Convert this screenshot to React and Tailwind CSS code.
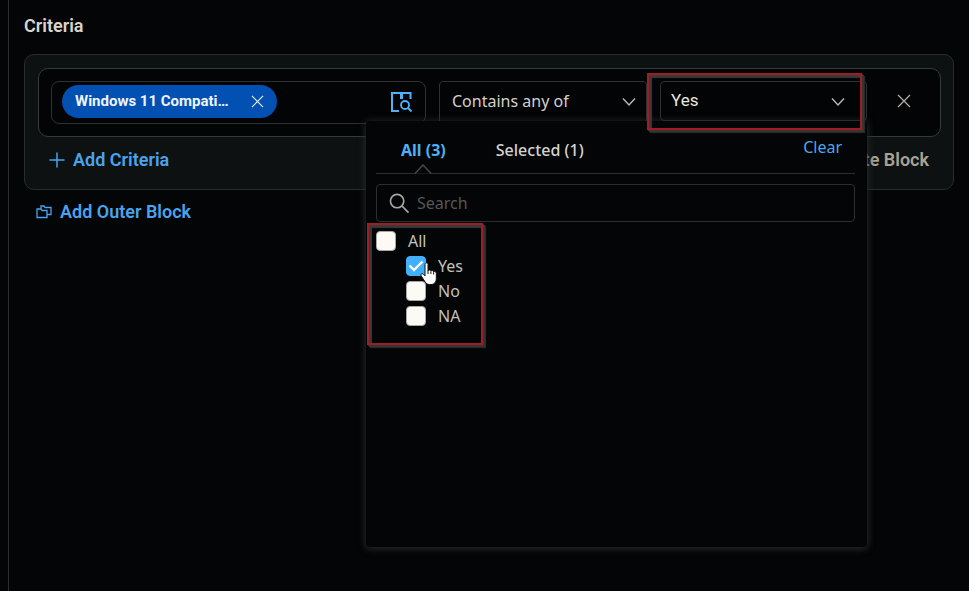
import React from "react";

const roboto = "font-[Roboto,'Liberation_Sans',sans-serif]";
const noto = "font-['Noto_Sans','Open_Sans',sans-serif]";

function Cross({ className }) {
  return (
    <svg viewBox="0 0 14 14" className={className} fill="none" stroke="currentColor" strokeWidth="1.2" aria-hidden="true">
      <path d="M1 1l12 12M13 1L1 13" />
    </svg>
  );
}

function Chevron() {
  return (
    <svg viewBox="0 0 14 10" className="pointer-events-none absolute top-4 right-[11px] h-[10px] w-[14px] text-[#b9b9b9]" fill="none" stroke="currentColor" strokeWidth="1.4" aria-hidden="true">
      <path d="M1 1.5l6 6.5 6-6.5" />
    </svg>
  );
}

// Red frame with a grey extruded shadow, falling to the bottom right.
function Highlight({ className }) {
  return (
    <div
      aria-hidden="true"
      className={`pointer-events-none absolute z-20 border-2 border-[#a01d26] shadow-[1px_1px_0_#363435,2px_2px_0_#363435,3px_3px_1px_#2b2a2b,inset_3px_3px_1px_#3b3a3b] ${className}`}
    />
  );
}

function CheckRow({ id, label, checked, nested }) {
  return (
    <div className={`flex h-[25px] items-center gap-3 ${nested ? "pl-[30px]" : ""}`}>
      <span className="relative flex size-5">
        <input
          id={id}
          type="checkbox"
          defaultChecked={checked}
          className="peer size-5 appearance-none rounded-[4px] border border-[#a9a7a4] bg-[#fdf9f5] checked:border-[#42b0fc] checked:bg-[#42b0fc]"
        />
        <svg viewBox="0 0 20 20" className="pointer-events-none absolute inset-0 hidden peer-checked:block" fill="none" stroke="#fff" strokeWidth="2.4" aria-hidden="true">
          <path d="M3.5 9.5l4.5 4.5 8.5-8.5" />
        </svg>
      </span>
      <label htmlFor={id} className="text-base leading-6 text-[#c4c1bd]">{label}</label>
    </div>
  );
}

function ValuePanel() {
  return (
    <div className={`absolute top-[40px] right-0 z-10 h-[426px] w-[501px] rounded-[4px] bg-[#030506] pr-3 pl-[10px] shadow-[0_1px_7px_1px_#262b2a] ${noto}`}>
      <div className="relative flex h-[53px] items-start border-b border-[#2b2f30] pt-[17px] pr-[13px] pl-[25px]">
        <button type="button" className="text-base leading-6 font-bold text-[#4eb0f6]">All (3)</button>
        <button type="button" className="ml-[50px] text-base leading-6 font-medium text-[#d6d3cf]">Selected (1)</button>
        <button type="button" className="-mt-[3px] ml-auto text-base leading-6 text-[#4ca8ea]">Clear</button>
        <svg viewBox="0 0 18 10" className="absolute -bottom-px left-[38px] h-[10px] w-[18px]" fill="#030506" stroke="#474a4b" strokeWidth="1.4" aria-hidden="true">
          <path d="M1 9.5l8-8.5 8 8.5" />
        </svg>
      </div>
      <div className="mt-[10px] flex h-[38px] items-center gap-[7px] rounded-[4px] border border-[#2b2f30] pl-3">
        <svg viewBox="0 0 22 22" className="size-[21px] shrink-0" fill="none" stroke="#a8a6a3" strokeWidth="1.7" aria-hidden="true">
          <circle cx="8.5" cy="8.5" r="7" />
          <path d="M13.5 13.5l7 7" />
        </svg>
        <input type="text" aria-label="Search" placeholder="Search" className="min-w-0 flex-1 bg-transparent text-base leading-6 text-[#d6d3cf] outline-none placeholder:text-[#575755]" />
      </div>
      <div className="relative mt-[6px]">
        <CheckRow id="opt-all" label="All" />
        <CheckRow id="opt-yes" label="Yes" checked nested />
        <CheckRow id="opt-no" label="No" nested />
        <CheckRow id="opt-na" label="NA" nested />
        <Highlight className="-top-[5px] -left-[9px] h-[122px] w-[116px]" />
        <svg viewBox="0 0 18 24" className="pointer-events-none absolute top-[34px] left-[44px] z-30 h-6 w-[18px]" fill="#fff" stroke="#111" strokeWidth="1" aria-hidden="true">
          <path d="M5 2.5C5 .3 8 .3 8 2.5V9c.3-1.4 2.9-1.3 2.9.2.5-1.1 2.7-.8 2.7.7.6-.8 2.7-.4 2.7 1.3v5.3c0 3.5-1.9 6-5.3 6H9.5c-2.2 0-3.4-1-4.5-2.8l-3.9-5.9c-1-1.7 1.1-2.9 2.3-1.6L5 13.8z" />
          <path d="M8 9v3M10.9 9.5V12M13.6 10.2V12.5" />
        </svg>
      </div>
    </div>
  );
}

export default function App() {
  return (
    <div className={`min-h-screen bg-[#030506] pl-2 ${roboto}`}>
      <main className="min-h-screen border-l border-[#2b2d2e] pt-[14px] pr-[15px] pl-[15px]">
        <h1 className="text-lg leading-6 font-semibold text-[#d9d4ce]">Criteria</h1>

        <section className="mt-4 rounded-[10px] border border-[#272c2c] bg-[#0d1111] pt-[13px] pr-3 pb-[17px] pl-[13px]">
          <div className="grid grid-cols-[minmax(0,1fr)_208px_207px_48px] items-start gap-[13px] rounded-[10px] border border-[#363a3a] bg-[#030405] p-3">
            <div className="flex h-[43px] items-start justify-between rounded-lg border border-[#2d3131] pt-[3px] pr-[13px] pl-[10px]">
              <div className="flex h-[33px] w-[215px] items-center justify-between rounded-full bg-[#0250b2] pr-[13px] pl-[13px] text-[#eef4fb]">
                <span className="pb-0.5 text-[15px] leading-5 font-bold">Windows 11 Compati…</span>
                <button type="button" aria-label="Remove"><Cross className="size-[13px]" /></button>
              </div>
              <button type="button" aria-label="Browse fields" className="mt-[6px]">
                <svg viewBox="0 0 22 22" className="size-[22px]" fill="none" stroke="#4fb2f5" strokeWidth="2" aria-hidden="true">
                  <path d="M9 20H2V2h18.5v6" />
                  <path d="M11.5 2v6" strokeWidth="3" />
                  <circle cx="15" cy="14" r="4" strokeWidth="1.8" />
                  <path d="M18 17l3.5 3.5" />
                </svg>
              </button>
            </div>

            <div className={`relative ${noto}`}>
              <select aria-label="Operator" className="h-[43px] w-full appearance-none rounded-[4px] border border-[#2d3131] bg-[#030405] px-3 pb-[3px] text-base text-[#d3d0cb]">
                <option>Contains any of</option>
              </select>
              <Chevron />
            </div>

            <div className="relative">
              <select aria-label="Value" className="h-10 w-full appearance-none rounded-[4px] border border-[#2d3131] bg-[#030405] pr-3 pl-[10px] text-[17px] text-[#ece7df]">
                <option>Yes</option>
              </select>
              <div className="pointer-events-none absolute top-0 right-[11px]"><Chevron /></div>
              <ValuePanel />
              <Highlight className="-top-2 -left-[13px] h-[57px] w-[215px]" />
            </div>

            <button type="button" aria-label="Delete criteria" className="flex h-10 items-center justify-center text-[#b5b1ac]">
              <Cross className="size-[14px]" />
            </button>
          </div>

          <div className="mt-[11px] flex items-center justify-between pr-3 pl-[11px]">
            <button type="button" className="flex items-center gap-2 text-lg leading-6 font-semibold text-[#4aa3ee]">
              <svg viewBox="0 0 16 16" className="size-4" fill="none" stroke="currentColor" strokeWidth="1.5" aria-hidden="true">
                <path d="M8 .5v15M.5 8h15" />
              </svg>
              Add Criteria
            </button>
            <button type="button" className="text-lg leading-6 font-semibold text-[#aaa395]">Delete Block</button>
          </div>
        </section>

        <button type="button" className="mt-[10px] ml-3 flex items-center gap-2 text-lg leading-6 font-semibold text-[#4aa3ee]">
          <svg viewBox="0 0 16 14" className="h-[14px] w-4" fill="none" stroke="currentColor" strokeWidth="1.3" aria-hidden="true">
            <path d="M1 4h4l1 1.5h5v7H1z" />
            <path d="M5 4V1h3l1 1.5h6v7h-4" />
          </svg>
          Add Outer Block
        </button>
      </main>
    </div>
  );
}
